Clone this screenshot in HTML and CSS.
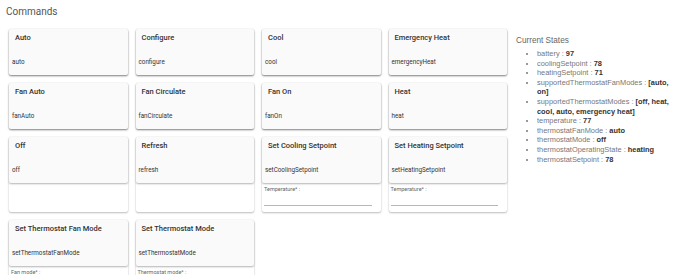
FILE: index.html
```html
<!DOCTYPE html>
<html lang="en">
<head>
    <meta charset="UTF-8">
    <title>Device Commands</title>
    <link rel="stylesheet" href="styles.css">
</head>
<body>
<div class="page">
    <section class="commands">
        <h2 class="commands-title">Commands</h2>
        <div class="grid">
            <div class="card">
                <div class="card-head">
                    <div class="card-title">Auto</div>
                    <div class="card-cmd">auto</div>
                </div>
            </div>
            <div class="card">
                <div class="card-head">
                    <div class="card-title">Configure</div>
                    <div class="card-cmd">configure</div>
                </div>
            </div>
            <div class="card">
                <div class="card-head">
                    <div class="card-title">Cool</div>
                    <div class="card-cmd">cool</div>
                </div>
            </div>
            <div class="card">
                <div class="card-head">
                    <div class="card-title">Emergency Heat</div>
                    <div class="card-cmd">emergencyHeat</div>
                </div>
            </div>

            <div class="card">
                <div class="card-head">
                    <div class="card-title">Fan Auto</div>
                    <div class="card-cmd">fanAuto</div>
                </div>
            </div>
            <div class="card">
                <div class="card-head">
                    <div class="card-title">Fan Circulate</div>
                    <div class="card-cmd">fanCirculate</div>
                </div>
            </div>
            <div class="card">
                <div class="card-head">
                    <div class="card-title">Fan On</div>
                    <div class="card-cmd">fanOn</div>
                </div>
            </div>
            <div class="card">
                <div class="card-head">
                    <div class="card-title">Heat</div>
                    <div class="card-cmd">heat</div>
                </div>
            </div>

            <div class="card">
                <div class="card-head">
                    <div class="card-title">Off</div>
                    <div class="card-cmd">off</div>
                </div>
                <div class="card-body"></div>
            </div>
            <div class="card">
                <div class="card-head">
                    <div class="card-title">Refresh</div>
                    <div class="card-cmd">refresh</div>
                </div>
                <div class="card-body"></div>
            </div>
            <div class="card">
                <div class="card-head">
                    <div class="card-title">Set Cooling Setpoint</div>
                    <div class="card-cmd">setCoolingSetpoint</div>
                </div>
                <div class="card-body">
                    <label class="param-label">Temperature* :</label>
                    <div class="param-input"></div>
                </div>
            </div>
            <div class="card">
                <div class="card-head">
                    <div class="card-title">Set Heating Setpoint</div>
                    <div class="card-cmd">setHeatingSetpoint</div>
                </div>
                <div class="card-body">
                    <label class="param-label">Temperature* :</label>
                    <div class="param-input"></div>
                </div>
            </div>

            <div class="card">
                <div class="card-head">
                    <div class="card-title">Set Thermostat Fan Mode</div>
                    <div class="card-cmd">setThermostatFanMode</div>
                </div>
                <div class="card-body">
                    <label class="param-label">Fan mode* :</label>
                    <div class="param-input"></div>
                </div>
            </div>
            <div class="card">
                <div class="card-head">
                    <div class="card-title">Set Thermostat Mode</div>
                    <div class="card-cmd">setThermostatMode</div>
                </div>
                <div class="card-body">
                    <label class="param-label">Thermostat mode* :</label>
                    <div class="param-input"></div>
                </div>
            </div>
        </div>
    </section>

    <aside class="states">
        <h3 class="states-title">Current States</h3>
        <ul class="states-list">
            <li>battery : <b>97</b></li>
            <li>coolingSetpoint : <b>78</b></li>
            <li>heatingSetpoint : <b>71</b></li>
            <li>supportedThermostatFanModes : <b>[auto, on]</b></li>
            <li>supportedThermostatModes : <b>[off, heat, cool, auto, emergency heat]</b></li>
            <li>temperature : <b>77</b></li>
            <li>thermostatFanMode : <b>auto</b></li>
            <li>thermostatMode : <b>off</b></li>
            <li>thermostatOperatingState : <b>heating</b></li>
            <li>thermostatSetpoint : <b>78</b></li>
        </ul>
    </aside>
</div>
</body>
</html>
```

FILE: styles.css
```css
body {
    margin: 0;
    background-color: #ffffff;
    font-family: Roboto, "Liberation Sans", sans-serif;
    color: #333333;
}

.page {
    display: flex;
    padding: 0 10px 0 6px;
    gap: 9px;
}

.commands-title {
    margin: 0;
    padding-top: 5px;
    font-size: 10px;
    line-height: 14px;
    font-weight: 400;
    color: #555555;
}

.grid {
    display: grid;
    grid-template-columns: repeat(4, 118.5px);
    gap: 8px;
    margin-top: 10px;
    margin-left: 3px;
}

.card {
    display: flex;
    flex-direction: column;
    background-color: #ffffff;
    border-radius: 2px;
    box-shadow: 0 1px 2px rgba(0, 0, 0, 0.25), 0 0 1px rgba(0, 0, 0, 0.15);
}

.card-head {
    height: 46px;
    box-sizing: border-box;
    padding: 4px 3px 0;
    background-color: #fafafa;
    border-radius: 2px;
    box-shadow: 0 1px 2px rgba(0, 0, 0, 0.3);
}

.card-title {
    padding-left: 3px;
    font-size: 7.5px;
    line-height: 10px;
    font-weight: 500;
    color: #333333;
}

.card-cmd {
    margin-top: 15px;
    font-size: 6.3px;
    line-height: 9px;
    color: #333333;
}

.card-body {
    flex: 1;
    min-height: 27px;
    padding: 2px 9px 0 2px;
}

.param-label {
    display: block;
    font-size: 5.5px;
    line-height: 8px;
    color: #666666;
}

.param-input {
    height: 12px;
    border-bottom: 1.5px solid #c8b0b0;
}

.states {
    flex: 1;
    padding-top: 35px;
    font-family: "Liberation Sans", Arial, sans-serif;
}

.states-title {
    margin: 0;
    font-size: 8.2px;
    line-height: 12px;
    font-weight: 400;
    color: #666666;
}

.states-list {
    margin: 2px 0 0;
    padding-left: 21px;
    font-size: 7.4px;
    line-height: 9.6px;
    color: #777777;
}

.states-list b {
    color: #333333;
}
```
